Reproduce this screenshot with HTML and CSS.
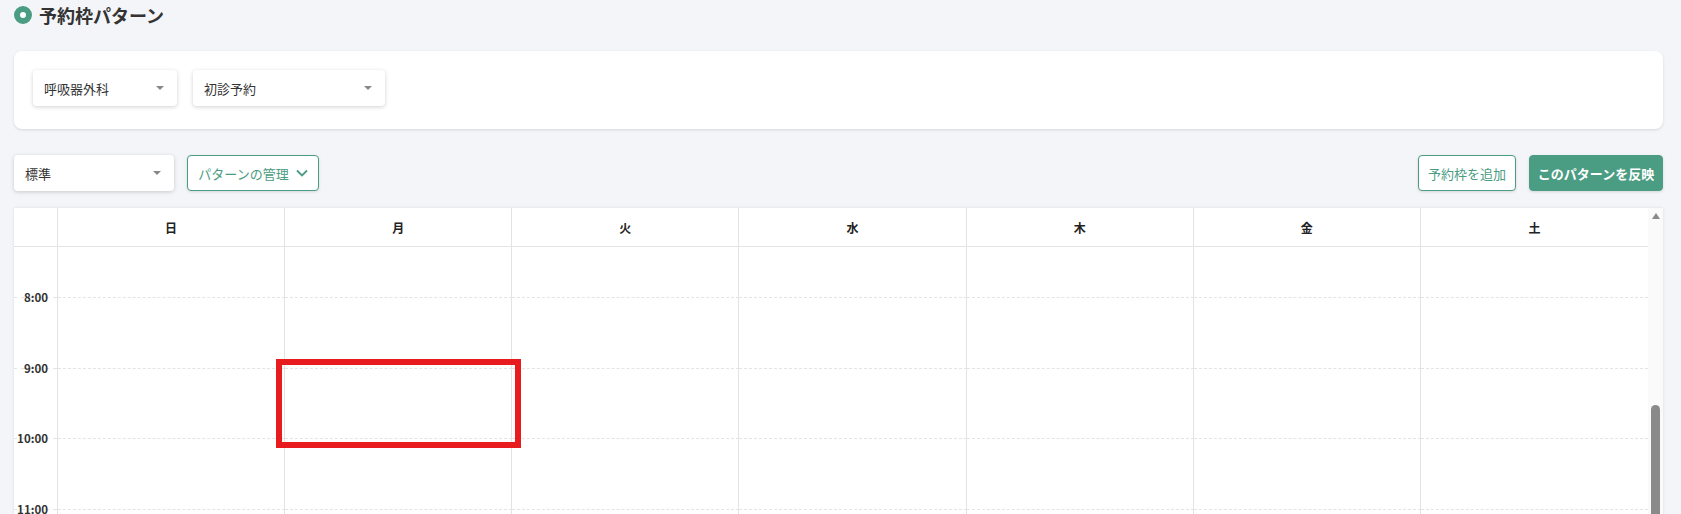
FILE: index.html
```html
<!DOCTYPE html>
<html lang="ja">
<head>
<meta charset="utf-8">
<title>予約枠パターン</title>
<link rel="stylesheet" href="styles.css">
</head>
<body>
<div class="page">
  <h1 class="title"><span class="title-dot"></span>予約枠パターン</h1>

  <section class="filter-card">
    <div class="select select-dept"><span>呼吸器外科</span><i class="caret"></i></div>
    <div class="select select-type"><span>初診予約</span><i class="caret"></i></div>
  </section>

  <div class="toolbar">
    <div class="select select-pattern"><span>標準</span><i class="caret"></i></div>
    <button class="btn btn-outline btn-manage">パターンの管理
      <svg class="chevron" width="12" height="8" viewBox="0 0 12 8"><path d="M1 1.5 L6 6.5 L11 1.5" fill="none" stroke="currentColor" stroke-width="1.8"/></svg>
    </button>
    <div class="toolbar-spacer"></div>
    <button class="btn btn-outline btn-add">予約枠を追加</button>
    <button class="btn btn-primary">このパターンを反映</button>
  </div>

  <section class="calendar">
    <div class="cal-main">
      <div class="cal-head">
        <div class="cell-time"></div>
        <div class="cell-day">日</div>
        <div class="cell-day">月</div>
        <div class="cell-day">火</div>
        <div class="cell-day">水</div>
        <div class="cell-day">木</div>
        <div class="cell-day">金</div>
        <div class="cell-day">土</div>
      </div>
      <div class="cal-body">
        <div class="row row-lead">
          <div class="cell-time"></div>
          <div class="cell"></div><div class="cell"></div><div class="cell"></div><div class="cell"></div><div class="cell"></div><div class="cell"></div><div class="cell"></div>
        </div>
        <div class="row row-hour">
          <div class="cell-time"><span class="hour">8:00</span></div>
          <div class="cell"></div><div class="cell"></div><div class="cell"></div><div class="cell"></div><div class="cell"></div><div class="cell"></div><div class="cell"></div>
        </div>
        <div class="row row-hour">
          <div class="cell-time"><span class="hour">9:00</span></div>
          <div class="cell"></div><div class="cell"></div><div class="cell"></div><div class="cell"></div><div class="cell"></div><div class="cell"></div><div class="cell"></div>
        </div>
        <div class="row row-hour">
          <div class="cell-time"><span class="hour">10:00</span></div>
          <div class="cell"></div><div class="cell"></div><div class="cell"></div><div class="cell"></div><div class="cell"></div><div class="cell"></div><div class="cell"></div>
        </div>
        <div class="row row-hour">
          <div class="cell-time"><span class="hour">11:00</span></div>
          <div class="cell"></div><div class="cell"></div><div class="cell"></div><div class="cell"></div><div class="cell"></div><div class="cell"></div><div class="cell"></div>
        </div>
        <div class="highlight"></div>
      </div>
    </div>
    <div class="scrollbar">
      <i class="scroll-up"></i>
      <div class="scroll-thumb"></div>
    </div>
  </section>
</div>
</body>
</html>
```

FILE: styles.css
```css
html, body {
  margin: 0;
  padding: 0;
  overflow: hidden;
  height: 100%;
}

body {
  background: #f4f5f9;
  font-family: "Noto Sans CJK JP", "Noto Sans", sans-serif;
  color: #333;
}

.page {
  padding: 0 18px 0 14px;
}

/* page heading */
.title {
  display: flex;
  align-items: center;
  gap: 7px;
  margin: 0;
  height: 30px;
  font-size: 18px;
  font-weight: 700;
  color: #333;
  line-height: 1;
}

.title-dot {
  box-sizing: border-box;
  width: 18px;
  height: 18px;
  border-radius: 50%;
  border: 6px solid #4a9c82;
  background: #fff;
  flex: none;
}

/* filter card */
.filter-card {
  margin-top: 21px;
  background: #fff;
  border-radius: 8px;
  box-shadow: 0 1px 3px rgba(0, 0, 0, 0.12);
  padding: 19px 19px 23px;
  display: flex;
  gap: 16px;
}

.select {
  box-sizing: border-box;
  height: 36px;
  background: #fff;
  border-radius: 4px;
  box-shadow: 0 1px 4px rgba(0, 0, 0, 0.18);
  display: flex;
  align-items: center;
  justify-content: space-between;
  padding: 0 13px 0 11px;
  font-size: 13px;
  color: #333;
}

.select-dept { width: 144px; }
.select-type { width: 192px; }
.select-pattern { width: 160px; }

.caret {
  width: 0;
  height: 0;
  border-left: 4px solid transparent;
  border-right: 4px solid transparent;
  border-top: 4px solid #888;
}

/* toolbar */
.toolbar {
  margin-top: 26px;
  display: flex;
  align-items: center;
  gap: 13px;
}

.toolbar-spacer { flex: 1; }

.btn {
  box-sizing: border-box;
  height: 36px;
  border-radius: 4px;
  font-family: inherit;
  font-size: 13px;
  padding: 0;
  display: inline-flex;
  align-items: center;
  justify-content: center;
  cursor: pointer;
  box-shadow: 0 1px 3px rgba(0, 0, 0, 0.12);
}

.btn-outline {
  background: #fff;
  color: #4a9c82;
  border: 1px solid #4a9c82;
}

.btn-manage {
  width: 132px;
  gap: 7px;
}

.btn-add { width: 98px; }

.chevron { color: #4a9c82; }

.btn-primary {
  width: 134px;
  background: #4a9c82;
  color: #fff;
  border: 1px solid #4a9c82;
  font-weight: 700;
}

/* weekly calendar */
.calendar {
  margin-top: 17px;
  background: #fff;
  box-shadow: 0 0 3px rgba(0, 0, 0, 0.1);
  display: flex;
  height: 320px;
  overflow: hidden;
}

.cal-main {
  flex: 1;
  min-width: 0;
}

.cal-head,
.row {
  display: grid;
  grid-template-columns: 44px repeat(7, 1fr);
}

.cal-head {
  height: 38px;
  border-bottom: 1px solid #e3e3e3;
}

.cal-head .cell-time,
.cal-head .cell-day {
  border-right: 1px solid #e3e3e3;
}

.cal-head .cell-day:last-child { border-right: none; }

.cell-day {
  display: flex;
  align-items: center;
  justify-content: center;
  font-size: 12px;
  font-weight: 700;
  color: #222;
}

.cal-body {
  position: relative;
}

.row .cell-time,
.row .cell {
  border-right: 1px solid #e3e3e3;
}

.row .cell:last-child { border-right: none; }

.row-lead { height: 50px; }
.row-hour { height: 70.67px; }

.row-hour .cell {
  border-top: 1px dashed #e4e4e4;
}

.row-hour .cell-time {
  background-image: linear-gradient(to right, #e4e4e4 50%, transparent 50%);
  background-size: 8px 1px;
  background-repeat: repeat-x;
  background-position: 39px 0;
}

.hour {
  display: block;
  text-align: right;
  padding-right: 9px;
  font-size: 11.5px;
  font-weight: 700;
  color: #333;
  line-height: 14px;
  transform: translateY(-7px);
}

/* selection marker drawn over the grid */
.highlight {
  position: absolute;
  left: 262px;
  top: 112px;
  width: 245px;
  height: 89px;
  box-sizing: border-box;
  border: 6px solid #e81c1f;
}

/* scrollbar */
.scrollbar {
  width: 15px;
  flex: none;
  background: #fafafa;
  display: flex;
  flex-direction: column;
  align-items: center;
}

.scroll-up {
  margin-top: 5px;
  width: 0;
  height: 0;
  border-left: 4.5px solid transparent;
  border-right: 4.5px solid transparent;
  border-bottom: 6px solid #8a8a8a;
}

.scroll-thumb {
  margin-top: 186px;
  width: 9px;
  flex: 1;
  background: #8a8a8a;
  border-radius: 5px 5px 0 0;
}
```
